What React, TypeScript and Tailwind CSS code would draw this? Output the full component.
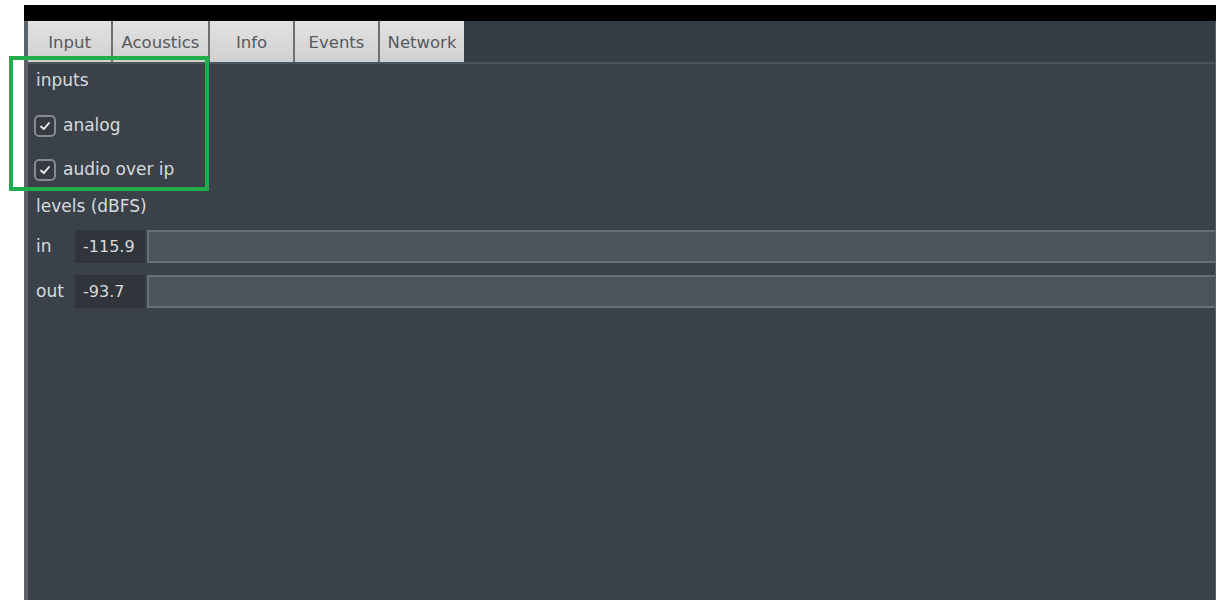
import React from 'react';

const tabs = [
    { label: 'Input', width: 'w-[85px]' },
    { label: 'Acoustics', width: 'w-[97px]' },
    { label: 'Info', width: 'w-[85px]' },
    { label: 'Events', width: 'w-[85px]' },
    { label: 'Network', width: 'w-[84px]' },
];

const CheckBox: React.FC = () => (
    <div className="w-[22px] h-[22px] rounded-[5px] border-2 border-[#858b91] bg-[#353b41] flex items-center justify-center">
        <svg width="12" height="12" viewBox="0 0 12 12" fill="none">
            <path d="M2 6.5 L4.8 9.2 L10 3" stroke="#f2f2f2" strokeWidth="1.8" strokeLinecap="round" strokeLinejoin="round" />
        </svg>
    </div>
);

const LevelRow: React.FC<{ label: string; value: string }> = ({ label, value }) => (
    <div className="flex h-[33px] items-stretch gap-[2px]">
        <div className="w-[45px] pl-[8px] flex items-center">{label}</div>
        <div className="w-[70px] bg-[#2f353b] flex items-center pl-[8px] text-[16px]">{value}</div>
        <div className="flex-1 bg-[#4c545b] border-y-2 border-l-2 border-[#687077]" />
    </div>
);

const App: React.FC = () => {
    return (
        <div className="relative w-[1220px] h-[604px] bg-white pt-[5px] pl-[24px] pr-[4px] font-['DejaVu_Sans',sans-serif]">
            {/* top black bar */}
            <div className="h-[16px] bg-black" />

            {/* panel */}
            <div className="h-[579px] flex bg-[#3a4148] border-r border-[#5a6168]">
                <div className="w-[4px] bg-[#5d6267]" />
                <div className="flex-1 flex flex-col text-[#d8dbde] text-[17px]">
                    {/* tabs */}
                    <div className="h-[43px] flex bg-[#363d44] border-b-2 border-[#4d555c]">
                        {tabs.map((tab, i) => (
                            <div
                                key={i}
                                className={`${tab.width} h-full pt-[4px] flex items-center justify-center bg-gradient-to-b from-[#e2e2e2] to-[#d0d0d0] text-[#555a5e] text-[16.5px] ${i < tabs.length - 1 ? 'border-r-2 border-[#707070]' : ''}`}
                            >
                                {tab.label}
                            </div>
                        ))}
                    </div>

                    {/* inputs */}
                    <div className="h-[34px] pl-[8px] flex items-center">inputs</div>
                    <div className="mt-[6px] h-[44px] pl-[6px] flex items-center gap-[7px]">
                        <CheckBox />
                        <span>analog</span>
                    </div>
                    <div className="h-[44px] pl-[6px] flex items-center gap-[7px]">
                        <CheckBox />
                        <span>audio over ip</span>
                    </div>

                    {/* levels */}
                    <div className="h-[30px] pl-[8px] flex items-center">levels (dBFS)</div>
                    <div className="mt-[8px] flex flex-col gap-[12px]">
                        <LevelRow label="in" value="-115.9" />
                        <LevelRow label="out" value="-93.7" />
                    </div>
                </div>
            </div>

            {/* highlight box */}
            <div className="absolute left-[9px] top-[56px] w-[200px] h-[135px] border-4 border-[#20ad4b]" />
        </div>
    );
};

export default App;
